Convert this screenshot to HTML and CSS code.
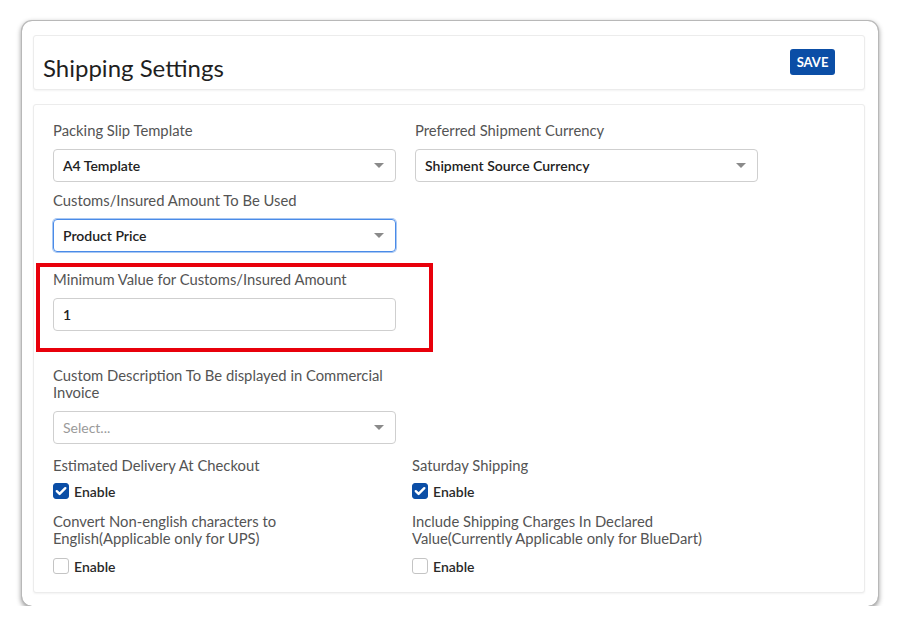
FILE: index.html
```html
<!DOCTYPE html>
<html>
<head>
<meta charset="utf-8">
<link rel="stylesheet" href="styles.css">
</head>
<body>
<div class="card">
  <div class="panel header">
    <h1 class="title">Shipping Settings</h1>
    <button class="save">SAVE</button>
  </div>
  <div class="panel body">
    <div class="row two">
      <div class="field">
        <div class="label">Packing Slip Template</div>
        <div class="select"><span>A4 Template</span><i class="caret"></i></div>
      </div>
      <div class="field">
        <div class="label">Preferred Shipment Currency</div>
        <div class="select"><span>Shipment Source Currency</span><i class="caret"></i></div>
      </div>
    </div>
    <div class="row two r2">
      <div class="field">
        <div class="label">Customs/Insured Amount To Be Used</div>
        <div class="select focus"><span>Product Price</span><i class="caret"></i></div>
      </div>
    </div>
    <div class="row two r3">
      <div class="field marked">
        <div class="label">Minimum Value for Customs/Insured Amount</div>
        <div class="select input"><span>1</span></div>
        <div class="highlight"></div>
      </div>
    </div>
    <div class="row two r4">
      <div class="field">
        <div class="label">Custom Description To Be displayed in Commercial Invoice</div>
        <div class="select"><span class="placeholder">Select...</span><i class="caret"></i></div>
      </div>
    </div>
    <div class="row checks r5">
      <div class="field">
        <div class="label">Estimated Delivery At Checkout</div>
        <label class="check"><span class="box on"><svg viewBox="0 0 16 16" width="16" height="16"><path d="M3.8 8.2l2.8 2.7L12.3 5.2" fill="none" stroke="#fff" stroke-width="2.4" stroke-linecap="round" stroke-linejoin="round"/></svg></span>Enable</label>
      </div>
      <div class="field">
        <div class="label">Saturday Shipping</div>
        <label class="check"><span class="box on"><svg viewBox="0 0 16 16" width="16" height="16"><path d="M3.8 8.2l2.8 2.7L12.3 5.2" fill="none" stroke="#fff" stroke-width="2.4" stroke-linecap="round" stroke-linejoin="round"/></svg></span>Enable</label>
      </div>
    </div>
    <div class="row checks r6">
      <div class="field">
        <div class="label">Convert Non-english characters to English(Applicable only for UPS)</div>
        <label class="check"><span class="box"></span>Enable</label>
      </div>
      <div class="field">
        <div class="label">Include Shipping Charges In Declared Value(Currently Applicable only for BlueDart)</div>
        <label class="check"><span class="box"></span>Enable</label>
      </div>
    </div>
  </div>
</div>
</body>
</html>
```
FILE: styles.css
```css
* { box-sizing: border-box; }
html, body { margin: 0; padding: 0; background: #fff; }
body { font-family: Lato, "Open Sans", sans-serif; color: #222; }

.card {
  margin: 21px 0 0 22px;
  width: 856px;
  height: 585px;
  border-radius: 10px;
  box-shadow: 0 0 0 1px #b8b8b8, 0 2px 5px 1px rgba(0,0,0,0.4);
  padding: 14px 13px 13px 11px;
  display: flex;
  flex-direction: column;
  gap: 14px;
}
.panel {
  border: 1px solid #ececec;
  border-radius: 3px;
  background: #fff;
  box-shadow: 0 1px 2px rgba(0,0,0,0.05);
}
.header {
  height: 55px;
  display: flex;
  align-items: center;
  justify-content: space-between;
  padding: 0 29px 0 9px;
}
.title {
  margin: 9px 0 0 0;
  font-size: 24px;
  font-weight: 400;
  color: #1f1f1f;
}
.save {
  width: 45px;
  height: 26px;
  margin-top: -1px;
  border: none;
  border-radius: 3px;
  background: #0b4ea6;
  color: #fff;
  font-family: Lato, sans-serif;
  font-weight: 700;
  font-size: 13px;
  padding: 0;
}
.body {
  flex: 1;
  padding: 17px 19px 0 19px;
}
.row { display: grid; }
.row.two { grid-template-columns: 343px 343px; column-gap: 19px; }
.row.checks { grid-template-columns: 339px 343px; column-gap: 20px; }
.r2 { margin-top: 10px; }
.r3 { margin-top: 19px; }
.r4 { margin-top: 36px; }
.r5 { margin-top: 13px; }
.r6 { margin-top: 14px; }

.label {
  font-size: 14.8px;
  line-height: 17px;
  color: #545454;
  margin-bottom: 10px;
}
.row.two .label { width: 335px; }
.checks .label { margin-bottom: 9px; width: 330px; }
.r6 .label { margin-bottom: 11px; }
.select {
  height: 33px;
  border: 1px solid #cfcfcf;
  border-radius: 4px;
  display: flex;
  align-items: center;
  justify-content: space-between;
  padding: 0 11px 0 9px;
  font-size: 14px;
  font-weight: 600;
  color: #222;
}
.select.focus { border-color: #4a8be8; box-shadow: 0 0 0 1px #a9c8f3; }
.placeholder { color: #9a9a9a; font-weight: 400; }
.caret {
  width: 0; height: 0;
  border-left: 5px solid transparent;
  border-right: 5px solid transparent;
  border-top: 5px solid #8a8a8a;
}
.field.marked { position: relative; }
.highlight {
  position: absolute;
  top: -8px; left: -17px; right: -37px; bottom: -21px;
  border: 4px solid #e8000b;
  pointer-events: none;
}
.check {
  display: flex;
  align-items: center;
  gap: 5px;
  font-size: 14px;
  font-weight: 600;
  color: #2a2a2a;
  height: 16px;
}
.box {
  width: 16px; height: 16px;
  border: 1px solid #c4c4c4;
  border-radius: 3px;
  display: inline-block;
  background: #fff;
}
.box.on { background: #0b4ea6; border-color: #0b4ea6; }
.box svg { display: block; margin: -1px; }
```
